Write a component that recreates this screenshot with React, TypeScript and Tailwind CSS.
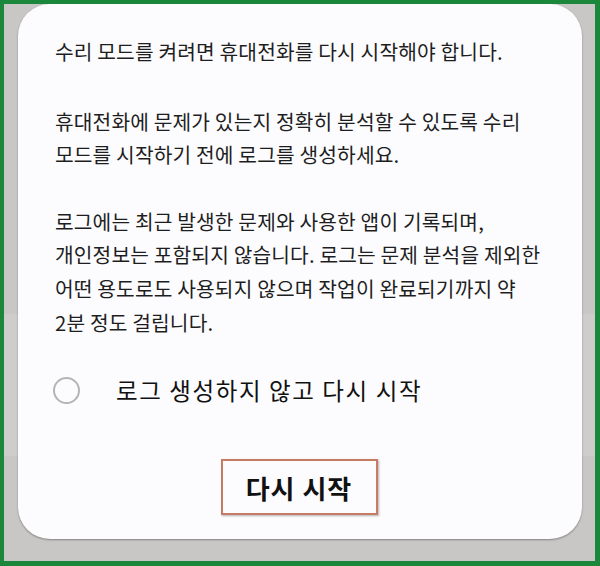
import React from "react";

export default function App() {
  const font = { fontFamily: '"Noto Sans CJK KR", "Noto Sans", sans-serif' };
  return (
    <div
      className="relative w-[600px] h-[566px] border-t-4 border-l-4 border-b-[5px] border-r-[5px] border-[#1b873a] bg-[#c9c7c5] flex flex-col pl-[14px] pr-[13px] pb-[22px] overflow-hidden"
      style={font}
    >
      <div className="absolute left-0 right-0 top-[310px] h-[142px] bg-[#cfcdcb]" />
      <div className="relative flex-1 bg-[#fcfcfe] rounded-[32px] shadow-[0_1px_2px_rgba(0,0,0,0.35)] flex flex-col pl-[37px] pr-[20px] pt-[31px]">
        <div className="text-[20.3px] leading-[33.6px] text-[#1e1e1e] whitespace-nowrap tracking-[0.15px]">
          <p>수리 모드를 켜려면 휴대전화를 다시 시작해야 합니다.</p>
          <p className="mt-[36px]">
            휴대전화에 문제가 있는지 정확히 분석할 수 있도록 수리
            <br />
            모드를 시작하기 전에 로그를 생성하세요.
          </p>
          <p className="mt-[33px]">
            로그에는 최근 발생한 문제와 사용한 앱이 기록되며,
            <br />
            개인정보는 포함되지 않습니다. 로그는 문제 분석을 제외한
            <br />
            어떤 용도로도 사용되지 않으며 작업이 완료되기까지 약
            <br />
            2분 정도 걸립니다.
          </p>
        </div>
        <div className="mt-[31px] flex items-center h-[40px]">
          <div className="w-[27px] h-[27px] rounded-full border-2 border-[#b4b4b4] -ml-[2px]" />
          <span className="ml-[36px] text-[23.5px] text-[#111111] tracking-[1.6px]">
            로그 생성하지 않고 다시 시작
          </span>
        </div>
        <div className="flex justify-center mt-[49px] pr-[19px]">
          <div className="w-[157px] h-[56px] border-2 border-[#c57c63] shadow-[1px_1px_2px_rgba(0,0,0,0.3)] flex items-center justify-center">
            <span className="text-[26px] font-bold text-[#111111] tracking-[1px]">다시 시작</span>
          </div>
        </div>
      </div>
    </div>
  );
}
